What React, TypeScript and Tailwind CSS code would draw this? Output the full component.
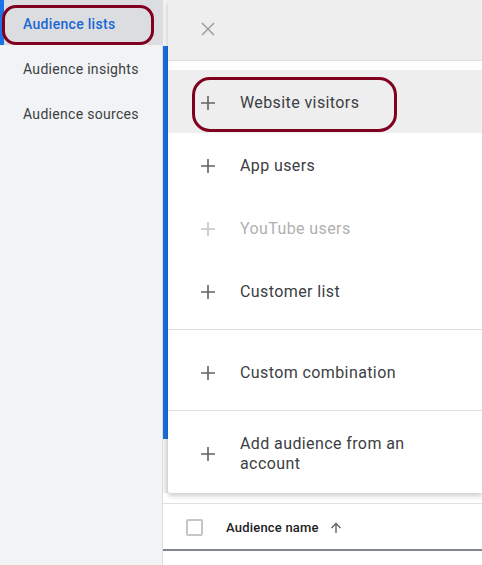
import React from "react";

const PlusIcon = ({ muted }: { muted?: boolean }) => (
  <svg width="16" height="16" viewBox="0 0 16 16" className={muted ? "text-[#c4c4c4]" : "text-[#616161]"}>
    <path d="M8 1v14M1 8h14" stroke="currentColor" strokeWidth="1.6" fill="none" />
  </svg>
);

const MenuRow = ({ label, muted, hovered, ring }: { label: string; muted?: boolean; hovered?: boolean; ring?: boolean }) => (
  <div className={`relative flex h-[63px] items-center gap-6 pl-8 pt-[2px] ${hovered ? "bg-[#eeeeee]" : ""}`}>
    <PlusIcon muted={muted} />
    <span className={`text-[16px] tracking-[0.4px] ${muted ? "text-[#b0b0b0]" : "text-[#3c4043]"}`}>{label}</span>
    {ring && (
      <div className="absolute left-[24px] top-[7px] h-[55px] w-[205px] rounded-[18px] border-[3px] border-[#800020]" />
    )}
  </div>
);

export default function App() {
  return (
    <div className="flex h-[565px] w-[482px] overflow-hidden bg-white" style={{ fontFamily: "Roboto, 'Liberation Sans', sans-serif" }}>
      {/* sidebar */}
      <aside className="w-[163px] shrink-0 border-r border-[#dadce0] bg-[#f1f3f4]">
        <div className="relative flex h-[45px] items-center border-l-4 border-[#1a73e8] bg-[#dcdde1] pl-[19px] pt-[4px] text-[14px] font-medium tracking-[0.3px] text-[#1967d2]">
          Audience lists
          <div className="absolute left-[-2px] top-[5px] h-[40px] w-[152px] rounded-[14px] border-[3px] border-[#800020]" />
        </div>
        <div className="flex h-[45px] items-center pl-[23px] pt-[4px] text-[14px] tracking-[0.3px] text-[#3c4043]">Audience insights</div>
        <div className="flex h-[45px] items-center pl-[23px] pt-[4px] text-[14px] tracking-[0.3px] text-[#3c4043]">Audience sources</div>
      </aside>

      <main className="flex min-w-0 flex-1 flex-col">
        <div className="flex h-[493px]">
          <div className="flex w-[5px] shrink-0 flex-col">
            <div className="h-[46px] bg-[#f3f3f3]" />
            <div className="h-[393px] bg-[#1a6ddb]" />
            <div className="flex-1 bg-gradient-to-r from-[#f4f4f4] to-[#e6e6e6]" />
          </div>
          <div className="flex flex-1 flex-col rounded-bl-[4px] bg-white shadow-[0_3px_5px_rgba(0,0,0,0.2)]">
            <div className="flex h-[61px] items-center border-b border-[#e0e0e0] bg-[#eeeeee] pl-[33px]">
              <svg width="14" height="14" viewBox="0 0 14 14" className="-mt-[2px]">
                <path d="M1 1l12 12M13 1L1 13" stroke="#9e9e9e" strokeWidth="1.5" fill="none" />
              </svg>
            </div>
            <div className="border-b border-[#e0e0e0] pb-[7px] pt-[9px]">
              <MenuRow label="Website visitors" hovered ring />
              <MenuRow label="App users" />
              <MenuRow label="YouTube users" muted />
              <MenuRow label="Customer list" />
            </div>
            <div className="flex h-[81px] items-center gap-6 border-b border-[#e0e0e0] pl-8 pt-[5px]">
              <PlusIcon />
              <span className="text-[16px] tracking-[0.4px] text-[#3c4043]">Custom combination</span>
            </div>
            <div className="flex flex-1 items-center gap-6 pl-8 pt-[4px]">
              <PlusIcon />
              <span className="w-[190px] text-[16px] leading-[20px] tracking-[0.4px] text-[#3c4043]">Add audience from an account</span>
            </div>
          </div>
        </div>
        <div className="h-[10px]" />
        <div className="flex h-[48px] items-center border-b-2 border-t border-b-[#80868b] border-t-[#e0e0e0] pl-[23px] pt-[2px]">
          <div className="h-[17px] w-[17px] rounded-[2px] border-2 border-[#c6c6c6]" />
          <span className="ml-[23px] text-[13px] font-medium tracking-[0.2px] text-[#202124]">Audience name</span>
          <svg width="12" height="12" viewBox="0 0 12 12" className="ml-[11px]">
            <path d="M6 11V1.5M1.5 6L6 1.5 10.5 6" stroke="#5f6368" strokeWidth="1.4" fill="none" />
          </svg>
        </div>
      </main>
    </div>
  );
}
